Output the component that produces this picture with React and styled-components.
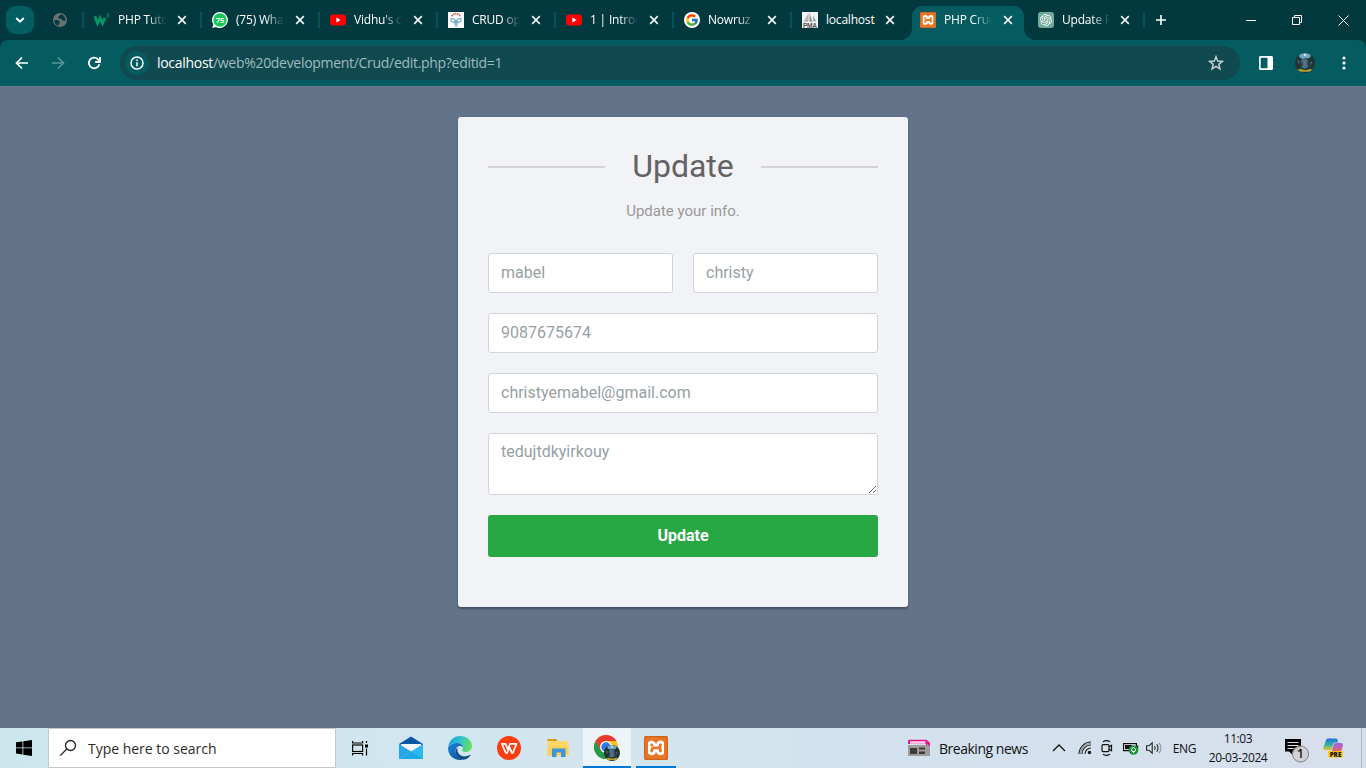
import React from "react";
import styled, { createGlobalStyle } from "styled-components";
import { FcGoogle } from "react-icons/fc";
import { SiXampp, SiOpenai } from "react-icons/si";

const Global = createGlobalStyle`
  * { box-sizing: border-box; }
  html, body { margin: 0; padding: 0; overflow: hidden; }
  svg { display: block; flex: none; }
`;

const ui = `"Open Sans", "Noto Sans", sans-serif`;

const Screen = styled.div`
  width: 1366px;
  height: 768px;
  display: flex;
  flex-direction: column;
  background: #63738a;
  overflow: hidden;
`;

/* ---------- tab strip ---------- */
const TabStrip = styled.div`
  height: 40px;
  flex: none;
  display: flex;
  background: #02393e;
  color: #fff;
  font-family: ${ui};
`;
const TabSearch = styled.div`
  width: 28px;
  height: 28px;
  margin: 6px 0 0 6px;
  border-radius: 9px;
  background: #045d61;
  display: flex;
  align-items: center;
  justify-content: center;
`;
const PinnedTab = styled.div`
  width: 49px;
  display: flex;
  align-items: center;
  padding-left: 18px;
`;
const TabSlot = styled.div`
  width: 118px;
  height: 40px;
  position: relative;
  display: flex;
  align-items: center;
  padding-left: 11px;
  isolation: isolate;
  &::before {
    content: "";
    display: ${(p) => (p.$line ? "block" : "none")};
    position: absolute;
    left: -1px;
    top: 12px;
    width: 2px;
    height: 16px;
    background: #045359;
  }
`;
const ActiveShape = styled.svg`
  position: absolute;
  left: -9px;
  top: 6px;
  z-index: -1;
`;
const TabTitle = styled.div`
  width: 49px;
  margin-left: 8px;
  white-space: nowrap;
  font-size: 12px;
  line-height: 18px;
  letter-spacing: -0.2px;
  mask-image: ${(p) => (p.$full ? "none" : "linear-gradient(90deg, #000 60%, transparent 98%)")};
`;
const CloseSvg = styled.svg`
  margin-left: ${(p) => (p.$last ? 6 : 7)}px;
`;
const NewTab = styled.div`
  width: 32px;
  display: flex;
  align-items: center;
  justify-content: center;
  position: relative;
  &::before {
    content: "";
    position: absolute;
    left: -2px;
    top: 12px;
    width: 2px;
    height: 16px;
    background: #045359;
  }
`;
const WindowButtons = styled.div`
  margin-left: auto;
  display: flex;
  align-items: center;
`;
const WindowButton = styled.div`
  width: 46px;
  display: flex;
  justify-content: center;
`;

/* ---------- address bar ---------- */
const ToolbarBack = styled.div`
  height: 46px;
  flex: none;
  background: #02393e;
`;
const Toolbar = styled.div`
  height: 46px;
  background: #045c61;
  border-radius: 8px 8px 0 0;
  display: flex;
  align-items: center;
  padding-left: 4px;
`;
const NavButton = styled.div`
  width: 36px;
  display: flex;
  justify-content: center;
`;
const AddressBar = styled.div`
  width: 1120px;
  flex: none;
  height: 34px;
  margin-left: 8px;
  border-radius: 17px;
  background: #10494f;
  display: flex;
  align-items: center;
  padding: 0 16px 0 5px;
`;
const InfoBadge = styled.div`
  width: 24px;
  height: 24px;
  border-radius: 50%;
  background: #045c61;
  display: flex;
  align-items: center;
  justify-content: center;
`;
const Url = styled.div`
  flex: 1;
  margin-left: 8px;
  font: 14px/20px ${ui};
  letter-spacing: -0.3px;
  color: #9fbcbf;
  b { font-weight: 400; color: #fff; }
`;
const ToolButton = styled.div`
  width: ${(p) => p.$w}px;
  display: flex;
  justify-content: center;
`;
const MenuButton = styled(ToolButton)`
  padding-left: 4px;
`;

/* ---------- page ---------- */
const Page = styled.main`
  flex: 1;
  display: flex;
  justify-content: center;
  align-items: flex-start;
  padding-top: 30px;
  border-top: 1px solid #66798a;
  font-family: Roboto, sans-serif;
`;
const Card = styled.form`
  width: 450px;
  height: 490px;
  padding: 30px;
  background: #f2f3f7;
  border-radius: 3px;
  box-shadow: 0 2px 2px rgba(0, 0, 0, 0.3);
  color: #999;
`;
const Heading = styled.h2`
  margin: 0 0 15px;
  height: 38px;
  display: flex;
  align-items: center;
  justify-content: space-between;
  font-size: 32px;
  font-weight: 400;
  line-height: 38px;
  color: #636363;
  &::before, &::after {
    content: "";
    width: 117px;
    height: 2px;
    margin-top: 2px;
    background: #d4d4d4;
  }
`;
const Hint = styled.p`
  margin: 0 0 30px;
  text-align: center;
  font-size: 15px;
  line-height: 23px;
`;
const Row = styled.div`
  display: flex;
  gap: 20px;
  margin-bottom: 20px;
`;
const Input = styled.input`
  flex: 1;
  min-width: 0;
  height: 40px;
  padding: 5px 12px 7px;
  border: 1px solid #ced4da;
  border-radius: 3px;
  background: #fff;
  color: #969fa4;
  font: 16px/24px Roboto, sans-serif;
  outline: none;
`;
const Area = styled.textarea`
  flex: 1;
  height: 62px;
  padding: 6px 12px;
  border: 1px solid #ced4da;
  border-radius: 3px;
  background: #fff;
  color: #969fa4;
  font: 16px/24px Roboto, sans-serif;
  resize: vertical;
  outline: none;
`;
const Submit = styled.button`
  width: 100%;
  height: 42px;
  border: 0;
  border-radius: 3px;
  background: #28a745;
  color: #fff;
  font: 700 16px/24px Roboto, sans-serif;
`;

/* ---------- taskbar ---------- */
const Taskbar = styled.div`
  height: 40px;
  flex: none;
  display: flex;
  align-items: stretch;
  background: linear-gradient(90deg, #cde6ed 0%, #d2e6ef 35%, #d3e2ee 65%, #d7deec 100%);
  font-family: ${ui};
  color: #111;
`;
const Cell = styled.div`
  width: ${(p) => p.$w}px;
  margin-left: ${(p) => p.$ml || 0}px;
  display: flex;
  align-items: center;
  justify-content: center;
  background: ${(p) => (p.$open ? "#ecf4f9" : "transparent")};
  border-bottom: ${(p) => (p.$open || p.$run ? "2px solid #0078d7" : "0")};
  padding-top: ${(p) => (p.$open || p.$run ? 2 : 0)}px;
`;
const SearchBox = styled.div`
  width: 288px;
  background: #fff;
  border: 1px solid #c9c5c4;
  display: flex;
  align-items: center;
  padding-left: 10px;
  gap: 11px;
  font-size: 14px;
  letter-spacing: -0.02px;
  color: #2b2b2b;
`;
const Tray = styled.div`
  margin-left: auto;
  display: flex;
`;
const News = styled.div`
  width: 144px;
  display: flex;
  align-items: center;
  padding-left: 12px;
  gap: 9px;
  font-size: 14px;
  letter-spacing: -0.48px;
  white-space: nowrap;
`;
const Lang = styled(Cell)`
  font-size: 12px;
  letter-spacing: -0.3px;
`;
const Clock = styled.div`
  width: 62px;
  display: flex;
  flex-direction: column;
  justify-content: center;
  align-items: center;
  gap: 1px;
  padding-top: 1px;
  font-size: 12px;
  line-height: 18px;
  letter-spacing: -0.4px;
  white-space: nowrap;
`;
const NoticeCell = styled(Cell)`
  padding: 4px 0 0 7px;
`;
const ShowDesktop = styled.div`
  width: 5px;
  margin-left: 12px;
  border-left: 1px solid #b1b8c4;
`;

/* ---------- icons ---------- */
const Close = ({ last }) => (
  <CloseSvg $last={last} width="16" height="16" viewBox="0 0 16 16" stroke="#eef4f4" strokeWidth="1.7">
    <path d="M4.2 4.2l7.6 7.6M11.8 4.2l-7.6 7.6" />
  </CloseSvg>
);
const Globe = () => (
  <svg width="16" height="16" viewBox="0 0 16 16">
    <circle cx="8" cy="8" r="7" fill="#6b7073" />
    <path d="M2.3 8h3.5l2 1.8v1.8h-1l-.3 2.2C3.5 13 2.3 10.800 2.300 8z M8 2.300v1.500l-2 1 .8 1.800 2.500.3 1.300 1.800h2.900c.3-3-1.500-6-5.500-6.400z" fill="#043b40" />
  </svg>
);
const W3 = () => (
  <svg width="16" height="16" viewBox="0 0 16 16" fill="none" stroke="#04aa6d">
    <path d="M.8 4.300l2.700 6.800 2.500-5 2.500 5L11 5.800" strokeWidth="3" stroke="#079563" />
    <path d="M12.600 2h2l-1 1.500c1.500.2 1.500 2.200-.9 1.800" strokeWidth=".9" />
  </svg>
);
const WhatsApp = () => (
  <svg width="16" height="16" viewBox="0 0 16 16">
    <path d="M8 0a8 8 0 1 1-4 15L.3 16l1-3.700A8 8 0 0 1 8 0z" fill="#fff" />
    <circle cx="8" cy="8" r="6.700" fill="#14c656" />
    <text x="8" y="10.600" fontSize="7.500" fontWeight="700" fontFamily="Open Sans" textAnchor="middle" fill="#fff">75</text>
  </svg>
);
const YouTube = () => (
  <svg width="16" height="16" viewBox="0 0 16 16">
    <rect x="0" y="2.400" width="16" height="11.200" rx="3" fill="#f00" />
    <path d="M6.400 5.600v4.800L10.600 8z" fill="#fff" />
  </svg>
);
const Owl = () => (
  <svg width="16" height="16" viewBox="0 0 16 16">
    <rect width="16" height="16" fill="#fff" />
    <path d="M3.500 4.200Q8 -1 12.500 4.200" fill="none" stroke="#d4593f" strokeWidth="1.500" strokeDasharray="1.600 .5" />
    <path d="M2 5.500l3 .6 3 1.400 3-1.400 3-.6-.8 4.500-2.700 1.200-1.300 3.500L8 15.300l-1.200-1.100-1.300-3.500L2.800 10z" fill="#9cc8da" />
    <circle cx="5" cy="8.300" r="1.700" fill="#fff" stroke="#58a0c0" strokeWidth=".8" />
    <circle cx="11" cy="8.300" r="1.700" fill="#fff" stroke="#58a0c0" strokeWidth=".8" />
    <path d="M7 9.500h2L8 11.500z" fill="#44718b" />
  </svg>
);
const Google = () => (
  <svg width="16" height="16" viewBox="0 0 16 16">
    <circle cx="8" cy="8" r="8" fill="#fff" />
    <g transform="translate(1 1)"><FcGoogle size={14} /></g>
  </svg>
);
const Pma = () => (
  <svg width="16" height="16" viewBox="0 0 16 16">
    <rect width="16" height="16" fill="#f3f3f3" />
    <path d="M6.500 1v8.500L1.500 10z" fill="#b5b5b5" />
    <path d="M7.500 1l3 9-3-.5zM11 3l3 6.500-2.500-.5z" fill="#8d8d8d" />
    <text x="8" y="15.600" fontSize="6.600" fontWeight="600" fontFamily="Liberation Sans" textAnchor="middle" textLength="14" fill="#555">PMA</text>
  </svg>
);
const Xampp = ({ s }) => (
  <svg width={s} height={s} viewBox="0 0 24 24">
    <rect width="24" height="24" rx="2" fill="#e8731c" />
    <rect x="4" y="4" width="16" height="16" fill="#fff" />
    <SiXampp size={24} color="#ea7524" />
    <rect x=".6" y=".6" width="22.800" height="22.800" rx="2" fill="none" stroke="#cf6420" strokeWidth="1.200" />
  </svg>
);
const OpenAi = () => (
  <svg width="16" height="16" viewBox="0 0 16 16">
    <rect width="16" height="16" rx="3" fill="#74aa9c" />
    <g transform="translate(2 2)"><SiOpenai size={12} color="#fff" /></g>
  </svg>
);
const Avatar = ({ s }) => (
  <svg width={s} height={s} viewBox="0 0 20 20">
    <defs><clipPath id={`av${s}`}><circle cx="10" cy="10" r="10" /></clipPath></defs>
    <g clipPath={`url(#av${s})`}>
      <rect width="20" height="20" fill="#22322f" />
      <path d="M4 0h12l-.5 4-2.500 1.500-2-.5-3 1-3.500-1.500z" fill="#6fa5c4" />
      <circle cx="10" cy="2" r="1.300" fill="#d9dfe2" />
      <path d="M6 7l3-1.500 3 .5 1.500 3-.5 5-3 2-3-1.500z" fill="#41708f" />
      <path d="M2 8l2-1 1 2-1 3zM15 8l2.500 1-1 3-1.500-1zM5 13l2 1-1 1.500zM14 13l2-.5-1 2.500z" fill="#3b5b68" />
      <path d="M9.200 8l1.500 1-.2 3.500-1.200.7z" fill="#a0625a" />
      <path d="M7 9l1.200 2L7 13zM12 7.500l1 3-1 2z" fill="#1e3a4c" />
      <path d="M2 16.500l4-.5 4 1.200 5-1.200 3 .7-3 2H5z" fill="#b5a32b" />
    </g>
  </svg>
);
const StartIcon = () => (
  <svg width="16" height="16" viewBox="0 0 16 16" fill="#000">
    <path d="M0 2.300L6.500 1.400v6.100H0zM7.300 1.300L16 0v7.500H7.300zM0 8.300h6.500v6.200L0 13.600zM7.300 8.300H16V16l-8.700-1.300z" />
  </svg>
);
const SearchIcon = () => (
  <svg width="18" height="18" viewBox="0 0 18 18" fill="none" stroke="#222" strokeWidth="1.300">
    <circle cx="11.500" cy="6.500" r="5" /><path d="M7.800 10L1.200 16.600" />
  </svg>
);
const TaskView = () => (
  <svg width="16" height="16" viewBox="0 0 16 16" fill="none" stroke="#000" strokeWidth="1.200">
    <path d="M.6 1v2h10V1M.6 15.500v-2h10v2M14.500 1v2M14.500 8.500v7" />
    <rect x=".6" y="5" width="10" height="6.500" /><path d="M13 4.500h3v3h-3z" fill="#000" stroke="none" />
  </svg>
);
const Mail = () => (
  <svg width="24" height="24" viewBox="0 0 24 24">
    <path d="M0 8L12 .5 24 8v3H0z" fill="#0a58a5" />
    <path d="M2 8h20v6H2z" fill="#f4f8fb" />
    <path d="M0 8l12 7.500L0 23z" fill="#27a5e5" />
    <path d="M24 8L0 23h24z" fill="#2fb9f2" />
    <path d="M0 23L12 15.500 24 23z" fill="#1597dc" opacity=".55" />
  </svg>
);
const Edge = () => (
  <svg width="24" height="24" viewBox="0 0 24 24">
    <defs>
      <linearGradient id="eg1" x1="0" y1=".2" x2="1" y2=".4"><stop offset="0" stopColor="#1aa0dc" /><stop offset=".5" stopColor="#2fc2d4" /><stop offset="1" stopColor="#6bde58" /></linearGradient>
      <linearGradient id="eg2" x1="0" y1="0" x2="1" y2="1"><stop offset="0" stopColor="#1c86d6" /><stop offset="1" stopColor="#0d4d9a" /></linearGradient>
    </defs>
    <path d="M.2 11C1 4.500 6 0 12 0c7 0 12 4.800 12 10 0 3.800-3 6-6 6-2.500 0-4-1-4-1.800 0-.6 1-1 1-2.700C15 9.300 12.500 7 9 7 5 7 1.500 8.800.2 11z" fill="url(#eg1)" />
    <path d="M.1 11.500C1.500 8.500 5 7 8.800 7c3.400 0 6.200 2 6.200 4.600-.6-1.100-1.700-1.600-2.800-1.600-2.700 0-4.700 2.200-4.700 5.200 0 3.700 2.800 6.800 6.500 8.500C6.500 25-.5 19.500.1 11.500z" fill="url(#eg2)" />
    <path d="M9.500 12c-.8 4.500 2.500 8.500 7 8.500 2 0 3.600-.6 5.300-1.700.5-.3.900.1.600.6-1.900 2.800-5 4.500-8.400 4.300-3.800-1.500-6.500-4.700-6.500-8.500 0-1.500.8-2.700 2-3.200z" fill="#114a8b" />
  </svg>
);
const Wps = () => (
  <svg width="24" height="24" viewBox="0 0 24 24">
    <circle cx="12" cy="12" r="12" fill="#fb3d12" />
    <path d="M4.800 7.800h3.700l2.300 5.700 2.200-5.700h6.500l-3.600 9h-1l-2.200-5.200-2.600 5.200h-1.200z" fill="none" stroke="#fff" strokeWidth="1.700" strokeLinejoin="round" />
  </svg>
);
const Folder = () => (
  <svg width="22" height="20" viewBox="0 0 22 20">
    <path d="M.5 1h8.500l2 2H21.500v15H.5z" fill="#ffd667" />
    <path d="M.5 1h8.500l1.500 2H.5z" fill="#d99c0c" />
    <path d="M.5 9h21v8H.5z" fill="#fbc94a" opacity=".6" />
    <path d="M5 10.500h13.500V19H14v-4.500H9.500V19H5z" fill="#3f95dc" />
  </svg>
);
const ChromeIcon = () => (
  <svg width="26" height="26" viewBox="0 0 26 26">
    <circle cx="12" cy="12" r="12" fill="#fbc116" />
    <path d="M1.600 6A12 12 0 0 0 12 24l5.200-9L6.800 15z" fill="#229a4c" />
    <path d="M1.600 6l5.200 9 5.200-9 10.400 0A12 12 0 0 0 1.600 6z" fill="#e33b2e" />
    <circle cx="12" cy="12" r="6" fill="#fff" /><circle cx="12" cy="12" r="4.700" fill="#2f76e8" />
    <g transform="translate(10 10)"><Avatar s={16} /></g>
  </svg>
);
const NewsIcon = () => (
  <svg width="22" height="18" viewBox="0 0 22 18">
    <path d="M1 .8h17.500l3.500 3V8h-4V5H0V1.800z" fill="#e3148d" />
    <rect x="2" y="2.200" width="15.500" height="2.600" fill="#f7cfe6" />
    <path d="M0 6h19V4.500l3 3V17H0z" fill="#a09c9a" />
    <path d="M2 9h7v6H2zM11 8.500h6v2h-6zM11 12.500h6v2.500h-6z" fill="#3b3b3b" />
  </svg>
);
const Chevron = () => (
  <svg width="14" height="8" viewBox="0 0 14 8" fill="none" stroke="#111" strokeWidth="1.300"><path d="M1 7l6-6 6 6" /></svg>
);
const Wifi = () => (
  <svg width="14" height="14" viewBox="0 0 14 14" fill="none" stroke="#222" strokeWidth="1.100">
    <path d="M1 13A12 12 0 0 1 13 1M4 13a9 9 0 0 1 9-9M7 13a6 6 0 0 1 6-6" /><path d="M2.500 13A10.500 10.500 0 0 1 13 2.500" opacity=".4" /><circle cx="11.500" cy="11.500" r="1.700" fill="#111" stroke="none" />
  </svg>
);
const MeetNow = () => (
  <svg width="12" height="16" viewBox="0 0 12 16" fill="none" stroke="#111" strokeWidth="1.200">
    <rect x="1" y="4.600" width="7" height="7" rx="1" /><path d="M8 7l2.500-1.700v5.500L8 9.300M2 1.800Q5.500-.4 9 1.800M2 14.300q3.500 2.200 7 0" />
  </svg>
);
const Battery = () => (
  <svg width="16" height="14" viewBox="0 0 16 14">
    <path d="M.6 2.600h12.800v7H.6z" fill="#fff" stroke="#111" strokeWidth="1.200" /><path d="M2 4h7v4.200H2zM14 4.500h1.200V8H14z" fill="#111" />
    <circle cx="10.500" cy="9" r="4.800" fill="#169238" />
    <path d="M10.500 6l2 2.500-.6 2h-2.800l-.6-2zM10.500 10v2" fill="none" stroke="#fff" strokeWidth="1" />
  </svg>
);
const Speaker = () => (
  <svg width="16" height="14" viewBox="0 0 16 14" fill="none" stroke="#222" strokeWidth="1.100">
    <path d="M.6 4.800H3L6.200 1.800v10.400L3 9.200H.6z" /><path d="M8.500 5q1.500 2 0 4M10.700 3.300q2.700 3.700 0 7.400" /><path d="M13 1.800q4 5.200 0 10.400" opacity=".4" />
  </svg>
);
const Notice = () => (
  <svg width="26" height="26" viewBox="0 0 26 26">
    <path d="M1 2h16v12.500H8.500V18l-3.300-3.500H1z" fill="#000" />
    <path d="M3.500 5.500h11M3.500 8.500h11M3.500 11.500h6" stroke="#dbe2ec" strokeWidth="1.100" />
    <circle cx="16.500" cy="17" r="8" fill="#cfd1d3" fillOpacity=".92" stroke="#777" strokeWidth=".9" />
    <text x="16.500" y="21" fontFamily="Open Sans" fontSize="12" fontWeight="600" textAnchor="middle" fill="#111">1</text>
  </svg>
);
const Copilot = () => (
  <svg width="20" height="20" viewBox="0 0 20 20">
    <defs>
      <linearGradient id="cp1" x1="0" y1="0" x2="0" y2="1"><stop offset="0" stopColor="#1a72e0" /><stop offset=".55" stopColor="#35b4a0" /><stop offset="1" stopColor="#e5c532" /></linearGradient>
      <linearGradient id="cp2" x1="0" y1="0" x2="0" y2="1"><stop offset="0" stopColor="#9b62e6" /><stop offset="1" stopColor="#f0646a" /></linearGradient>
    </defs>
    <path d="M5.500.5h7.500c1 0 1.500 1 1.800 2l.5 2H12c-1 0-1.500.8-1.800 1.800L8.600 12H2C.3 12 0 10.500.5 9l2.600-7C3.500 1 4.300.5 5.500.5z" fill="url(#cp1)" />
    <path d="M12.800 5H18c1.700 0 2.300 1.300 1.800 3l-1.500 6H8.500l2.300-7.500c.3-1 1-1.500 2-1.500z" fill="url(#cp2)" />
    <rect x="5" y="13" width="15" height="6.500" rx=".8" fill="#fbc70f" />
    <text x="12.500" y="18.500" fontFamily="Open Sans" fontSize="6.300" fontWeight="800" textAnchor="middle" fill="#111">PRE</text>
  </svg>
);

const tabs = [
  { icon: <W3 />, title: "PHP Tuto" },
  { icon: <WhatsApp />, title: "(75) Wha" },
  { icon: <YouTube />, title: "Vidhu's c" },
  { icon: <Owl />, title: "CRUD op" },
  { icon: <YouTube />, title: "1 | Introd" },
  { icon: <Google />, title: "Nowruz -" },
  { icon: <Pma />, title: "localhost", full: true },
  { icon: <Xampp s={16} />, title: "PHP Cruc", active: true },
  { icon: <OpenAi />, title: "Update P" },
];

export default function App() {
  return (
    <Screen>
      <Global />
      <TabStrip>
        <TabSearch>
          <svg width="10" height="6" viewBox="0 0 10 6" fill="none" stroke="#fff" strokeWidth="1.800"><path d="M1.200 1L5 4.700 8.800 1" /></svg>
        </TabSearch>
        <PinnedTab><Globe /></PinnedTab>
        {tabs.map((t, i) => (
          <TabSlot key={i} $line={i < 7}>
            {t.active && (
              <ActiveShape width="136" height="34" viewBox="0 0 136 34">
                <path d="M0 34A12 12 0 0 0 12 22V10A10 10 0 0 1 22 0H114A10 10 0 0 1 124 10V22A12 12 0 0 0 136 34z" fill="#045c61" />
              </ActiveShape>
            )}
            {t.icon}
            <TabTitle $full={t.full}>{t.title}</TabTitle>
            <Close last={i === tabs.length - 1} />
          </TabSlot>
        ))}
        <NewTab>
          <svg width="12" height="12" viewBox="0 0 12 12" stroke="#fff" strokeWidth="1.600"><path d="M6 1v10M1 6h10" /></svg>
        </NewTab>
        <WindowButtons>
          <WindowButton><svg width="10" height="10" viewBox="0 0 10 10" stroke="#fff"><path d="M0 5.500h10" /></svg></WindowButton>
          <WindowButton><svg width="10" height="10" viewBox="0 0 10 10" stroke="#fff" fill="none"><path d="M.5 2.500h7v7h-7zM2.500 2.500v-2h7v7h-2" /></svg></WindowButton>
          <WindowButton><svg width="11" height="11" viewBox="0 0 11 11" stroke="#fff"><path d="M.5.5l10 10M10.500.5l-10 10" /></svg></WindowButton>
        </WindowButtons>
      </TabStrip>

      <ToolbarBack>
        <Toolbar>
          <NavButton><svg width="14" height="14" viewBox="0 0 14 14" fill="none" stroke="#fff" strokeWidth="1.700"><path d="M13 7H2M7 1.500L1.500 7 7 12.500" /></svg></NavButton>
          <NavButton><svg width="14" height="14" viewBox="0 0 14 14" fill="none" stroke="#5d989b" strokeWidth="1.600"><path d="M1 7h11M7 1.500L12.500 7 7 12.500" /></svg></NavButton>
          <NavButton><svg width="14" height="14" viewBox="0 0 14 14" fill="none" stroke="#fff" strokeWidth="1.800"><path d="M12.300 8.200A5.300 5.300 0 1 1 11 3.300L12.600 5M13 1v5H8.200" /></svg></NavButton>
          <AddressBar>
            <InfoBadge>
              <svg width="14" height="14" viewBox="0 0 14 14" fill="none" stroke="#fff" strokeWidth="1.500"><circle cx="7" cy="7" r="6" /><path d="M7 6.200v4M7 3.500v1.500" /></svg>
            </InfoBadge>
            <Url><b>localhost</b>/web%20development/Crud/edit.php?editid=1</Url>
            <svg width="16" height="16" viewBox="0 0 16 16" fill="none" stroke="#c4cfd0" strokeWidth="1.500"><path d="M8 1.800l1.700 4.300 4.600.3-3.500 2.900 1.100 4.500L8 11.300l-3.900 2.500 1.100-4.500L1.700 6.400l4.600-.3z" /></svg>
          </AddressBar>
          <ToolButton $w={52}>
            <svg width="14" height="14" viewBox="0 0 14 14"><path fillRule="evenodd" d="M1.500 0h11A1.500 1.500 0 0 1 14 1.500v11a1.500 1.500 0 0 1-1.500 1.500h-11A1.500 1.500 0 0 1 0 12.500v-11A1.500 1.500 0 0 1 1.500 0zM1.700 1.700v10.600h6.800V1.700z" fill="#fff" /></svg>
          </ToolButton>
          <ToolButton $w={26}><Avatar s={20} /></ToolButton>
          <MenuButton $w={48}>
            <svg width="4" height="14" viewBox="0 0 4 14" fill="#fff"><circle cx="2" cy="2" r="1.600" /><circle cx="2" cy="7" r="1.600" /><circle cx="2" cy="12" r="1.600" /></svg>
          </MenuButton>
        </Toolbar>
      </ToolbarBack>

      <Page>
        <Card>
          <Heading>Update</Heading>
          <Hint>Update your info.</Hint>
          <Row><Input defaultValue="mabel" /><Input defaultValue="christy" /></Row>
          <Row><Input defaultValue="9087675674" /></Row>
          <Row><Input defaultValue="christyemabel@gmail.com" /></Row>
          <Row><Area spellCheck={false} defaultValue="tedujtdkyirkouy" /></Row>
          <Submit type="button">Update</Submit>
        </Card>
      </Page>

      <Taskbar>
        <Cell $w={48}><StartIcon /></Cell>
        <SearchBox><SearchIcon />Type here to search</SearchBox>
        <Cell $w={48}><TaskView /></Cell>
        <Cell $w={48} $ml={3}><Mail /></Cell>
        <Cell $w={48} $ml={1}><Edge /></Cell>
        <Cell $w={48} $ml={1}><Wps /></Cell>
        <Cell $w={48} $ml={1}><Folder /></Cell>
        <Cell $w={48} $ml={1} $open><ChromeIcon /></Cell>
        <Cell $w={40} $ml={5} $run><Xampp s={24} /></Cell>
        <Tray>
          <News><NewsIcon />Breaking news</News>
          <Cell $w={26} $ml={6}><Chevron /></Cell>
          <Cell $w={26}><Wifi /></Cell>
          <Cell $w={18}><MeetNow /></Cell>
          <Cell $w={30}><Battery /></Cell>
          <Cell $w={16}><Speaker /></Cell>
          <Lang $w={45}>ENG</Lang>
          <Clock><span>11:03</span><span>20-03-2024</span></Clock>
          <NoticeCell $w={48}><Notice /></NoticeCell>
          <Cell $w={32}><Copilot /></Cell>
          <ShowDesktop />
        </Tray>
      </Taskbar>
    </Screen>
  );
}
